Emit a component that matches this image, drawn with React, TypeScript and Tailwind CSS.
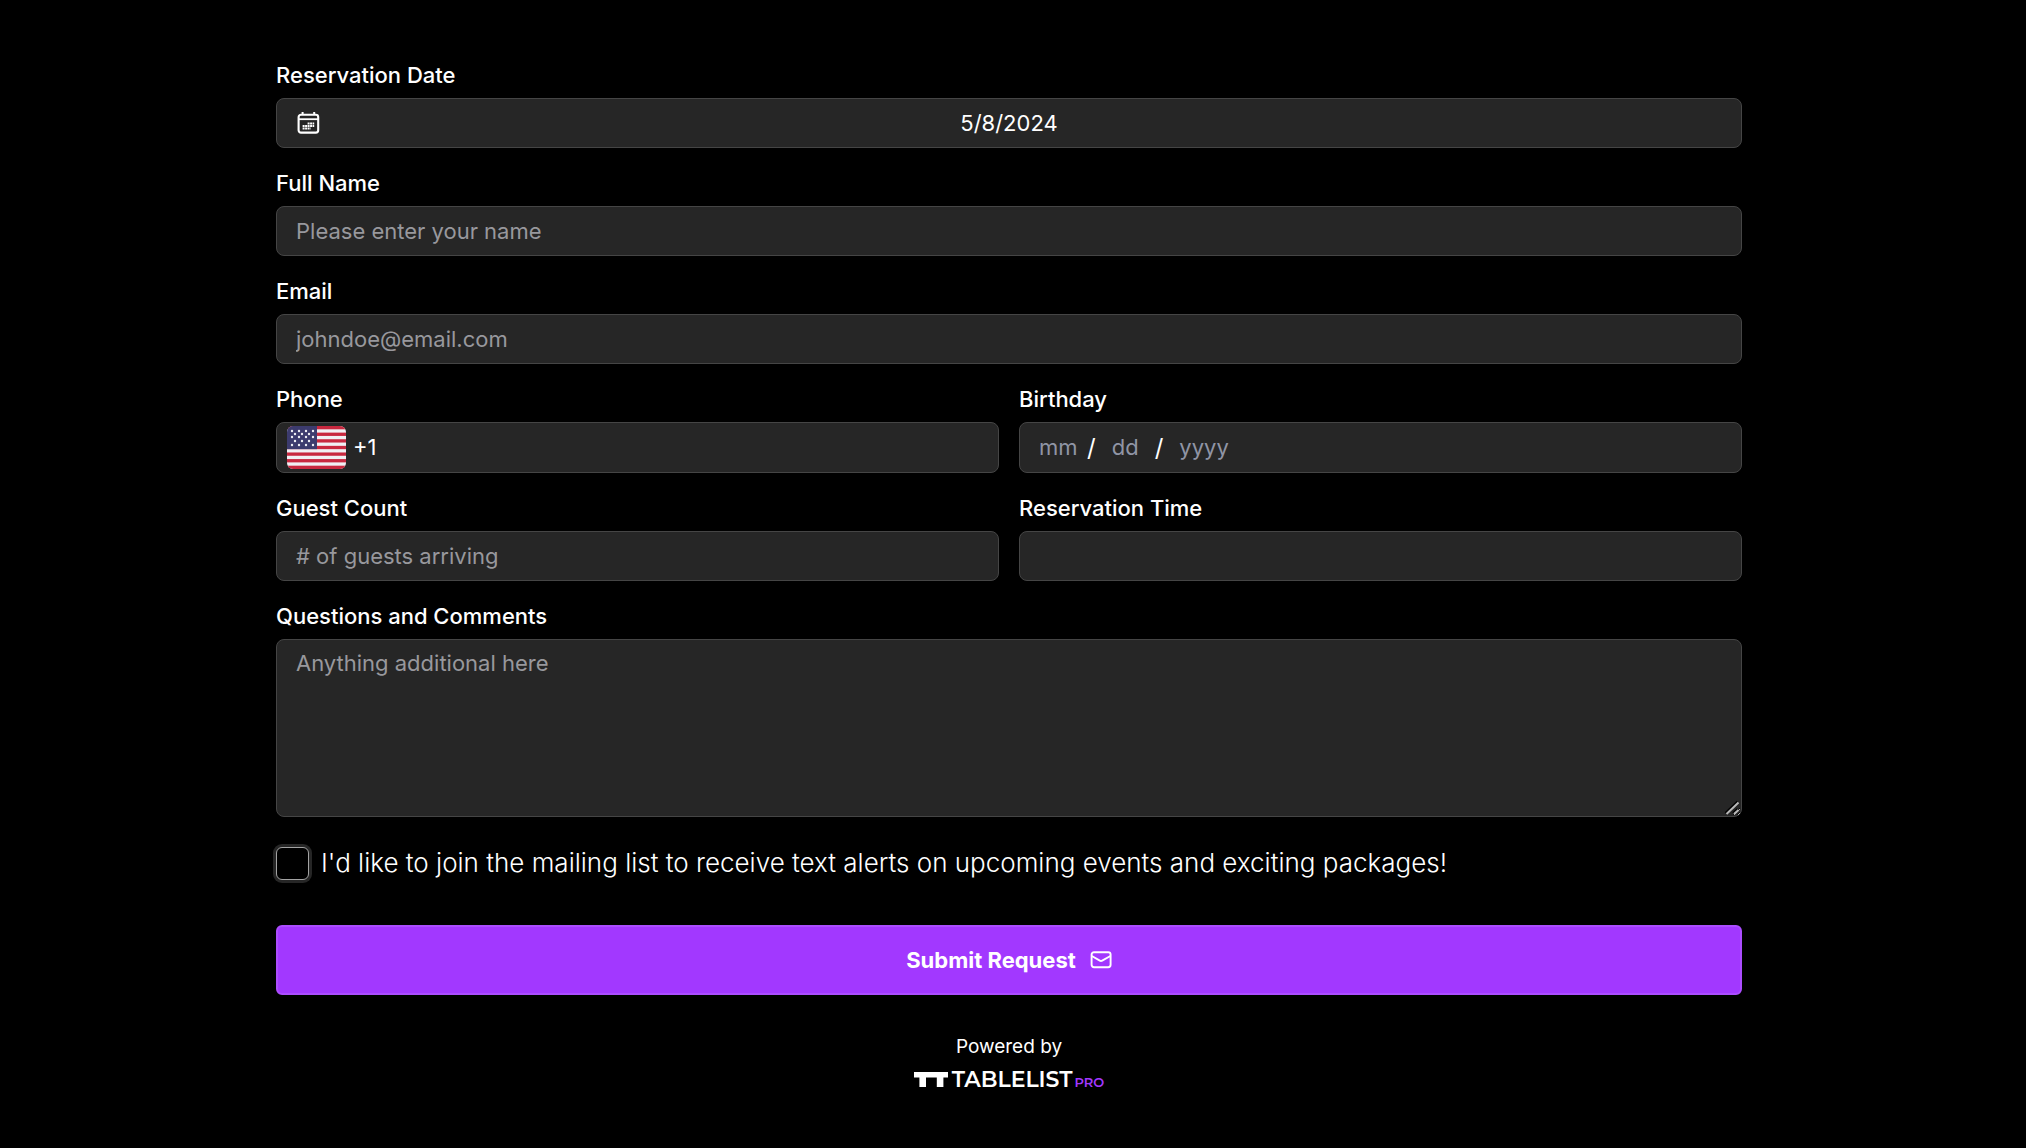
import React from "react";

interface FieldProps {
  id: string;
  label: string;
  children: React.ReactNode;
}

const boxClass =
  "w-full rounded-lg border border-[#454545] bg-[#262626] text-[22px] text-white focus-within:border-[#a238ff]";
const inputClass = `${boxClass} h-[50px] px-[19px] outline-none placeholder:text-[#98989d]`;
const datePartClass =
  "bg-transparent text-[22px] outline-none placeholder:text-[#9095a5]";

const Field = ({ id, label, children }: FieldProps) => (
  <div className="flex min-w-0 flex-1 flex-col gap-2">
    <label htmlFor={id} className="text-[22px] leading-[30px] font-medium">
      {label}
    </label>
    {children}
  </div>
);

const CalendarIcon = () => (
  <svg width="24" height="22" viewBox="-1 0 24 22" fill="none" stroke="white">
    <rect x="1.6" y="2.8" width="19.6" height="17.8" rx="2.4" strokeWidth="2.1" />
    <path d="M1.6 7.2h19.6" strokeWidth="1.8" />
    <path d="M5.6 0v3M17.2 0v3" strokeWidth="2" />
    <path d="M10.6 11.4h6.6M5.6 14h11.6M5.6 16.6h8" strokeWidth="2" strokeDasharray="2 0.5" />
  </svg>
);

const stars = [
  [5, 5], [12, 5], [19, 5], [26, 5],
  [8, 8], [15, 8], [22, 8],
  [5, 11], [12, 11], [19, 11], [26, 11],
  [8, 15], [15, 15], [22, 15],
  [5, 19], [12, 19], [19, 19], [26, 19],
];

const UsFlag = () => (
  <svg width="59" height="43" viewBox="0 0 59 43" className="overflow-hidden rounded-md">
    <rect width="59" height="43" fill="#f0f0f4" />
    {[0, 1, 2, 3, 4, 5, 6].map((i) => (
      <rect key={i} y={i * 6.615} width="59" height="3.31" fill="#c8283f" />
    ))}
    <rect width="30" height="23.15" fill="#3c3b6e" />
    {stars.map(([x, y]) => (
      <circle key={`${x}-${y}`} cx={x} cy={y} r="1.2" fill="#f0f0f4" />
    ))}
  </svg>
);

const MailIcon = () => (
  <svg width="22" height="18" viewBox="0 0 22 18" fill="none" stroke="white" strokeWidth="1.9" strokeLinejoin="round">
    <rect x="1.6" y="1.2" width="19" height="15" rx="2.4" />
    <path d="M1.8 5l8 4.6a2.4 2.4 0 0 0 2.4 0L20.4 5" />
  </svg>
);

const ResizeGrip = () => (
  <svg
    width="15"
    height="15"
    viewBox="0 0 15 15"
    className="pointer-events-none absolute right-0.5 bottom-0.5"
    fill="none"
  >
    <path d="M0.5 13L12.5 1.5M8 13L12.5 9" stroke="black" strokeWidth="2" />
    <path d="M1.5 14L13.5 2.5M9 14L13.5 10" stroke="#b8b8b8" strokeWidth="2" />
  </svg>
);

const TablelistLogo = () => (
  <a href="#" aria-label="Tablelist Pro" className="flex items-end font-[Montserrat,Inter,sans-serif]">
    <svg width="34" height="15" viewBox="0 0 34 15" fill="white" className="mr-1">
      <path d="M0 0H34V5.4H29.4V15H22.8V5.4H12V15H5.4V5.4H0Z" />
    </svg>
    <span className="text-[22px] leading-[15px] font-semibold text-white">TABLELIST</span>
    <span className="ml-0.5 text-[13px] leading-[10px] font-semibold text-[#a238ff]">PRO</span>
  </a>
);

export default function App() {
  return (
    <main className="min-h-screen bg-black px-6 pt-[60px] pb-10 font-[Inter,sans-serif] text-white">
      <form
        className="mx-auto flex w-full max-w-[1466px] flex-col gap-5 lg:relative lg:right-1"
        onSubmit={(e) => e.preventDefault()}
      >
        <Field id="date" label="Reservation Date">
          <div className={`${boxClass} flex h-[50px] items-center px-[19px]`}>
            <CalendarIcon />
            <input
              id="date"
              defaultValue="5/8/2024"
              className="min-w-0 flex-1 bg-transparent pr-6 text-center outline-none"
            />
          </div>
        </Field>

        <Field id="name" label="Full Name">
          <input id="name" className={inputClass} placeholder="Please enter your name" />
        </Field>

        <Field id="email" label="Email">
          <input id="email" type="email" className={inputClass} placeholder="johndoe@email.com" />
        </Field>

        <div className="flex gap-5">
          <Field id="phone" label="Phone">
            <div className={`${boxClass} flex h-[51px] items-center gap-[7px] px-[10px]`}>
              <button type="button" aria-label="Country">
                <UsFlag />
              </button>
              <input
                id="phone"
                type="tel"
                defaultValue="+1"
                className="min-w-0 flex-1 bg-transparent outline-none"
              />
            </div>
          </Field>
          <Field id="birthday" label="Birthday">
            <div className={`${boxClass} flex h-[51px] items-center px-[19px]`}>
              <input id="birthday" className={`${datePartClass} w-12`} placeholder="mm" />
              <span className="text-2xl">/</span>
              <input aria-label="Day" className={`${datePartClass} ml-4 w-[43px]`} placeholder="dd" />
              <span className="text-2xl">/</span>
              <input aria-label="Year" className={`${datePartClass} ml-4 w-20`} placeholder="yyyy" />
            </div>
          </Field>
        </div>

        <div className="flex gap-5">
          <Field id="guests" label="Guest Count">
            <input id="guests" className={inputClass} placeholder="# of guests arriving" />
          </Field>
          <Field id="time" label="Reservation Time">
            <input id="time" className={inputClass} />
          </Field>
        </div>

        <Field id="comments" label="Questions and Comments">
          <div className="relative">
            <textarea
              id="comments"
              className={`${boxClass} block h-[178px] px-[19px] py-[7px] outline-none placeholder:text-[#98989d]`}
              placeholder="Anything additional here"
            />
            <ResizeGrip />
          </div>
        </Field>

        <div className="mt-2 flex items-center gap-3">
          <input
            id="mailing"
            type="checkbox"
            className="size-[33px] shrink-0 appearance-none rounded-md border border-[#a3a3a3] bg-black ring-3 ring-[#262626] checked:bg-[#a238ff]"
          />
          <label htmlFor="mailing" className="text-[26px] leading-9 font-light">
            I'd like to join the mailing list to receive text alerts on upcoming events and exciting packages!
          </label>
        </div>

        <button
          type="submit"
          className="mt-6 flex h-[70px] items-center justify-center gap-3.5 rounded-md border-2 border-[#ac4dff] bg-[#a238ff] text-[22px] font-bold"
        >
          Submit Request
          <MailIcon />
        </button>

        <div className="mt-[18px] flex flex-col items-center gap-[11px]">
          <p className="text-[19px] leading-7">Powered by</p>
          <TablelistLogo />
        </div>
      </form>
    </main>
  );
}
